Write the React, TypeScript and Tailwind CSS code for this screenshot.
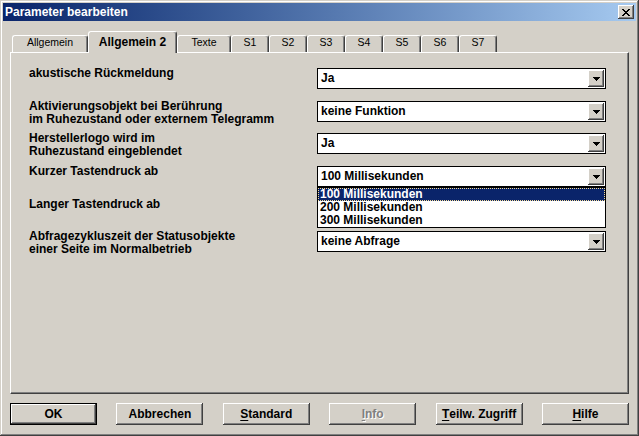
import React from 'react'

// Win2000 style bevels
const raised =
  'shadow-[inset_-1px_-1px_0_#404040,inset_1px_1px_0_#ffffff,inset_-2px_-2px_0_#808080,inset_2px_2px_0_#d4d0c8]'

const tabs = [
  { label: 'Allgemein', w: 'w-[76px]' },
  { label: 'Allgemein 2', w: 'w-[89px]', active: true },
  { label: 'Texte', w: 'w-[54px]' },
  { label: 'S1', w: 'w-[38px]' },
  { label: 'S2', w: 'w-[38px]' },
  { label: 'S3', w: 'w-[38px]' },
  { label: 'S4', w: 'w-[38px]' },
  { label: 'S5', w: 'w-[38px]' },
  { label: 'S6', w: 'w-[38px]' },
  { label: 'S7', w: 'w-[38px]' },
]

const ArrowDown = () => (
  <svg width="7" height="4" viewBox="0 0 7 4" shapeRendering="crispEdges">
    <rect x="0" y="0" width="7" height="1" fill="#000" />
    <rect x="1" y="1" width="5" height="1" fill="#000" />
    <rect x="2" y="2" width="3" height="1" fill="#000" />
    <rect x="3" y="3" width="1" height="1" fill="#000" />
  </svg>
)

const CloseGlyph = () => (
  <svg width="8" height="7" viewBox="0 0 8 7" shapeRendering="crispEdges">
    <rect x="0" y="0" width="2" height="1" fill="#000" />
    <rect x="6" y="0" width="2" height="1" fill="#000" />
    <rect x="1" y="1" width="2" height="1" fill="#000" />
    <rect x="5" y="1" width="2" height="1" fill="#000" />
    <rect x="2" y="2" width="4" height="1" fill="#000" />
    <rect x="3" y="3" width="2" height="1" fill="#000" />
    <rect x="2" y="4" width="4" height="1" fill="#000" />
    <rect x="1" y="5" width="2" height="1" fill="#000" />
    <rect x="5" y="5" width="2" height="1" fill="#000" />
    <rect x="0" y="6" width="2" height="1" fill="#000" />
    <rect x="6" y="6" width="2" height="1" fill="#000" />
  </svg>
)

interface ComboProps {
  value: string
  options?: string[]
}

const Combo: React.FC<ComboProps> = ({ value, options }) => (
  <div className="relative self-start mt-px">
    <div className="w-[289px] h-[21px] border border-black bg-white flex items-center p-px">
      <span className="flex-1 pl-[2px] text-[12px] leading-[13px] font-bold text-black">{value}</span>
      <div className={`w-[16px] h-[17px] bg-[#d4d0c8] ${raised} flex items-center justify-center`}>
        <ArrowDown />
      </div>
    </div>

    {/* open list, lies over the next row */}
    {options && (
      <div className="absolute left-0 top-full z-20 w-[289px] border border-black bg-white">
        {options.map((o, i) => (
          <div
            key={o}
            className={
              i === 0
                ? 'h-[13px] leading-[13px] pl-[2px] text-[12px] font-bold bg-[#0a246a] text-white outline-1 outline-dotted outline-[#f5db95] -outline-offset-1'
                : 'h-[13px] leading-[13px] pl-[2px] text-[12px] font-bold text-black'
            }
          >
            {o}
          </div>
        ))}
      </div>
    )}
  </div>
)

interface BtnProps {
  children: React.ReactNode
  isDefault?: boolean
  disabled?: boolean
}

const Btn: React.FC<BtnProps> = ({ children, isDefault, disabled }) => (
  <div
    className={`w-[87px] h-[22px] bg-[#d4d0c8] ${raised} flex items-center justify-center text-[12px] font-bold leading-[13px] ${
      isDefault ? 'border border-black' : ''
    } ${disabled ? 'text-[#808080] [text-shadow:1px_1px_0_#ffffff]' : 'text-black'}`}
  >
    {children}
  </div>
)

const Label: React.FC<{ children: React.ReactNode }> = ({ children }) => (
  <div className="flex-1 text-[12px] leading-[13px] font-bold text-black">{children}</div>
)

export default function App() {
  return (
    <div
      className={`w-[639px] h-[436px] bg-[#d4d0c8] p-[3px] font-['Liberation_Sans',Arial,sans-serif] shadow-[inset_-1px_-1px_0_#404040,inset_1px_1px_0_#d4d0c8,inset_-2px_-2px_0_#808080,inset_2px_2px_0_#ffffff] flex flex-col`}
    >
      {/* Title bar */}
      <div className="h-[18px] bg-linear-to-r from-[#0a246a] to-[#a6caf0] flex items-center pl-[2px] pr-[2px]">
        <span className="flex-1 text-white font-bold text-[12px] leading-[13px]">Parameter bearbeiten</span>
        <div className={`w-[16px] h-[14px] bg-[#d4d0c8] ${raised} flex items-center justify-center`}>
          <CloseGlyph />
        </div>
      </div>

      <div className="px-[7px] pt-[10px]">
        {/* Tabs */}
        <div className="flex items-end h-[21px] pl-[2px]">
          {tabs.map(t =>
            t.active ? (
              <div
                key={t.label}
                className={`${t.w} h-[22px] -mb-px relative z-10 bg-[#d4d0c8] border-t border-l border-r border-t-white border-l-white border-r-[#404040] rounded-t-[3px] shadow-[inset_-1px_0_0_#808080] pt-[4px] text-center text-[12px] leading-[13px] font-bold text-black`}
              >
                {t.label}
              </div>
            ) : (
              <div
                key={t.label}
                className={`${t.w} h-[17px] bg-[#d4d0c8] border-t border-l border-r border-t-white border-l-white border-r-[#404040] rounded-t-[3px] shadow-[inset_-1px_0_0_#808080] text-center text-[10.5px] leading-[13px] text-black`}
              >
                {t.label}
              </div>
            )
          )}
        </div>

        {/* Tab page */}
        <div className="h-[342px] border border-t-white border-l-white border-r-[#404040] border-b-[#404040] shadow-[inset_-1px_-1px_0_#808080] pt-[14px] pl-[18px] pr-[22px]">
          <div className="flex h-[33px]">
            <Label>akustische Rückmeldung</Label>
            <Combo value="Ja" />
          </div>
          <div className="flex h-[32px]">
            <Label>
              Aktivierungsobjekt bei Berührung
              <br />
              im Ruhezustand oder externem Telegramm
            </Label>
            <Combo value="keine Funktion" />
          </div>
          <div className="flex h-[33px]">
            <Label>
              Herstellerlogo wird im
              <br />
              Ruhezustand eingeblendet
            </Label>
            <Combo value="Ja" />
          </div>
          <div className="flex h-[33px] relative z-20">
            <Label>Kurzer Tastendruck ab</Label>
            <Combo
              value="100 Millisekunden"
              options={['100 Millisekunden', '200 Millisekunden', '300 Millisekunden']}
            />
          </div>
          {/* its combo is hidden under the open list above */}
          <div className="flex h-[32px]">
            <Label>Langer Tastendruck ab</Label>
          </div>
          <div className="flex">
            <Label>
              Abfragezykluszeit der Statusobjekte
              <br />
              einer Seite im Normalbetrieb
            </Label>
            <Combo value="keine Abfrage" />
          </div>
        </div>

        {/* Buttons */}
        <div className="mt-[9px] flex justify-between">
          <Btn isDefault>OK</Btn>
          <Btn>Abbrechen</Btn>
          <Btn>
            <u className="underline-offset-2">S</u>tandard
          </Btn>
          <Btn disabled>
            <u className="underline-offset-2">I</u>nfo
          </Btn>
          <Btn>
            <u className="underline-offset-2">T</u>eilw. Zugriff
          </Btn>
          <Btn>
            <u className="underline-offset-2">H</u>ilfe
          </Btn>
        </div>
      </div>
    </div>
  )
}
